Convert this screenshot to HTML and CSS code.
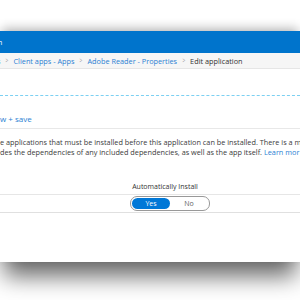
FILE: index.html
```html
<!DOCTYPE html>
<html>
<head>
<meta charset="utf-8">
<link rel="stylesheet" href="styles.css">
</head>
<body>
<div class="blade">
  <div class="header"><span class="title">n</span></div>
  <div class="crumbs">
    <span class="sep">s</span>
    <span class="chev">&gt;</span>
    <span class="link">Client apps - Apps</span>
    <span class="chev">&gt;</span>
    <span class="link">Adobe Reader - Properties</span>
    <span class="chev">&gt;</span>
    <span class="current">Edit application</span>
  </div>
  <div class="body">
    <div class="dashed"></div>
    <div class="step">w + save</div>
    <div class="desc">
      <div class="line">e applications that must be installed before this application can be installed. There is a m</div>
      <div class="line">des the dependencies of any included dependencies, as well as the app itself. <span class="learn">Learn mor</span></div>
    </div>
    <div class="table">
      <div class="th">Automatically Install</div>
      <div class="row">
        <div class="toggle"><span class="opt on">Yes</span><span class="opt">No</span></div>
      </div>
    </div>
  </div>
</div>
</body>
</html>
```
FILE: styles.css
```css
html {
  overflow: hidden;
  scrollbar-width: none;
}
html, body {
  margin: 0;
  padding: 0;
  background: #fff;
  font-family: "Open Sans", "Noto Sans", sans-serif;
}
body {
  height: 300px;
  overflow: hidden;
}
.blade {
  margin-top: 31px;
  height: 231px;
  background: #fff;
  overflow: hidden;
  box-shadow: 0 18px 22px -4px rgba(0,0,0,0.6), 0 -4px 10px -2px rgba(0,0,0,0.3);
}
.header {
  height: 22px;
  background: #0074cc;
  display: flex;
  align-items: center;
}
.title {
  color: #fff;
  font-size: 7px;
  margin-left: -2px;
}
.crumbs {
  height: 15px;
  background: #f6f6f6;
  border-bottom: 1px solid #e6e6e6;
  display: flex;
  align-items: center;
  gap: 4.5px;
  font-size: 7.3px;
  white-space: nowrap;
  overflow: hidden;
}
.sep { color: #3a8fd8; margin-left: -3px; }
.chev { color: #999; font-size: 7px; transform: scaleX(0.7); }
.link { color: #2a7fd3; }
.current { color: #333; }
.body {
  padding-top: 26px;
}
.dashed {
  border-top: 1px dashed #7cd0f2;
}
.step {
  margin-top: 18px;
  font-size: 8px;
  color: #2a7fd3;
  height: 14px;
  line-height: 10px;
}
.desc {
  border-top: 1px solid #e8e8e8;
  padding-top: 8px;
  font-size: 7.3px;
  line-height: 10px;
  color: #3b3b3b;
  white-space: nowrap;
  overflow: hidden;
}
.learn { color: #2a7fd3; }
.table {
  margin-top: 25px;
}
.th {
  text-align: center;
  font-size: 7px;
  color: #333;
  height: 12px;
  line-height: 10px;
  padding-left: 30px;
  border-bottom: 1px solid #e6e6e6;
}
.row {
  display: flex;
  justify-content: center;
  padding: 1px 0 1px 40px;
  border-bottom: 1px solid #e0e0e0;
}
.toggle {
  display: flex;
  width: 76px;
  height: 11px;
  border: 1px solid #999;
  border-radius: 7px;
  padding: 1px;
}
.opt {
  flex: 1;
  text-align: center;
  font-size: 7px;
  line-height: 11px;
  color: #666;
  border-radius: 6px;
}
.opt.on {
  background: #0078d7;
  color: #fff;
}
```
